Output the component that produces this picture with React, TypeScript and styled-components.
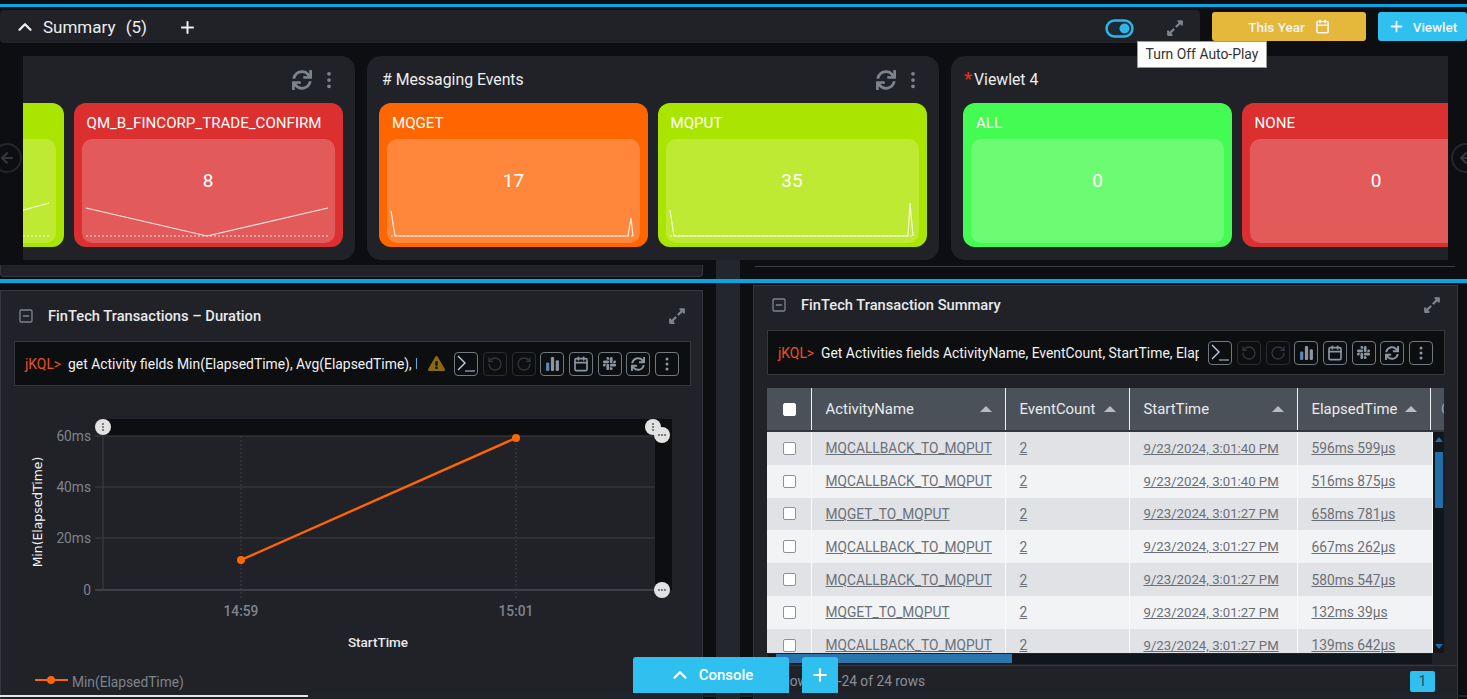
import React from 'react';
import styled, { createGlobalStyle } from 'styled-components';
import { ChevronUp, Plus, SquareMinus, Calendar, RotateCcw, RotateCw } from 'lucide-react';
import { FaSync, FaExpandAlt, FaSlack, FaExclamationTriangle, FaArrowLeft } from 'react-icons/fa';
import { BsThreeDotsVertical } from 'react-icons/bs';

const GlobalStyle = createGlobalStyle`
  html, body {
    margin: 0;
    height: 100%;
    overflow: hidden;
    background: #0d0e11;
    font-family: Roboto, "Liberation Sans", sans-serif;
  }
`;

const Page = styled.div`
  width: 1467px;
  height: 699px;
  position: relative;
  overflow: hidden;
  display: flex;
  flex-direction: column;
`;

const BlueLine = styled.div<{ $top: number; $h: number }>`
  height: ${(p) => p.$h}px;
  margin-top: ${(p) => p.$top}px;
  background: #06a6e6;
  flex: none;
`;

const HeaderRow = styled.div`
  display: flex;
  height: 33px;
  margin-top: 3px;
  flex: none;
`;

const SummaryBar = styled.div`
  width: 1200px;
  flex: none;
  background: #202228;
  border-radius: 4px;
  display: flex;
  align-items: center;
  padding: 1px 0 0 14px;
  box-sizing: border-box;
  color: #eceef0;
`;

const SummaryTitle = styled.span`
  font-size: 17px;
  font-weight: 400;
  margin-left: 7px;
  word-spacing: 6px;
  width: 135px;
`;

const Toggle = styled.svg`
  margin-left: auto;
  margin-right: 32px;
  margin-top: 3px;
`;

const ExpandBtn = styled(FaExpandAlt)<{ $size?: number }>`
  color: #7d838c;
  font-size: ${(p) => p.$size || 18}px;
  flex: none;
`;

const BarExpand = styled(ExpandBtn)`
  margin-right: 16px;
  margin-top: 1px;
`;

const ActionButton = styled.div<{ $bg: string; $w: number; $ml: number; $gap: number }>`
  width: ${(p) => p.$w}px;
  margin-left: ${(p) => p.$ml}px;
  height: 29px;
  margin-top: 2px;
  background: ${(p) => p.$bg};
  border-radius: 3px;
  color: #f4f4f4;
  display: flex;
  align-items: center;
  justify-content: center;
  gap: ${(p) => p.$gap}px;
  font-size: 13.5px;
  font-weight: 500;
  flex: none;
`;

const Tooltip = styled.div`
  position: absolute;
  left: 1137px;
  top: 41px;
  width: 130px;
  height: 27px;
  box-sizing: border-box;
  background: #fff;
  border: 1px solid #9a9a9a;
  color: #333;
  font-size: 13.9px;
  text-align: center;
  line-height: 25px;
  white-space: nowrap;
  z-index: 5;
`;

const Carousel = styled.div`
  margin: 13px 19px 0 23px;
  height: 204px;
  overflow: hidden;
  display: flex;
  gap: 12px;
  flex: none;
`;

const ViewletCard = styled.div<{ $shift?: number }>`
  width: 572px;
  height: 204px;
  flex: none;
  margin-left: ${(p) => p.$shift || 0}px;
  background: #202228;
  border-radius: 14px;
  padding: 0 13px 0 12px;
  box-sizing: border-box;
`;

const CardHead = styled.div`
  height: 47px;
  display: flex;
  align-items: center;
  padding: 0 3px;
  box-sizing: border-box;
  color: #eceef0;
  font-size: 15.8px;
  font-weight: 400;
`;

const Star = styled.span`
  color: #e8321a;
  margin: -2px 2px 0 -2px;
  font-size: 18px;
  font-weight: 500;
`;

const CardTools = styled.div`
  margin-left: auto;
  display: flex;
  align-items: center;
  gap: 7px;
  color: #7d838c;
  font-size: 20px;
`;

const Tiles = styled.div`
  display: flex;
  gap: 9.5px;
`;

const Tile = styled.div<{ $bg: string }>`
  width: 269px;
  height: 144px;
  flex: none;
  background: ${(p) => p.$bg};
  border-radius: 12px;
  padding: 0 8px 4px 8px;
  box-sizing: border-box;
  color: #fff;
  display: flex;
  flex-direction: column;
`;

const TileLabel = styled.div`
  height: 36px;
  line-height: 40px;
  padding-left: 5px;
  font-size: 15.1px;
  font-weight: 400;
  white-space: nowrap;
  flex: none;
`;

const TileInner = styled.div<{ $bg: string }>`
  flex: 1;
  position: relative;
  background: ${(p) => p.$bg};
  border-radius: 10px;
  text-align: center;
  font-size: 19px;
  font-weight: 400;
  padding-top: 30px;
  box-sizing: border-box;
`;

const Spark = styled.svg`
  position: absolute;
  left: 0;
  top: 0;
`;

const CarouselArrow = styled.div<{ $left: number }>`
  position: absolute;
  left: ${(p) => p.$left}px;
  top: 143px;
  width: 30px;
  height: 30px;
  border-radius: 50%;
  border: 2px solid #24262b;
  box-sizing: border-box;
  color: #33363c;
  display: flex;
  align-items: center;
  justify-content: center;
  font-size: 14px;
`;

const Columns = styled.div`
  display: grid;
  grid-template-columns: 703px 24px 705px;
  column-gap: 13px;
  justify-content: start;
`;

const Remnant = styled(Columns)`
  height: 19px;
  flex: none;
`;

const RemnantLeft = styled.div`
  height: 12px;
  margin-top: 5px;
  background: #202228;
  border: 1px solid #34373d;
  border-top: 0;
  border-radius: 0 0 4px 4px;
  box-sizing: border-box;
`;

const Gutter = styled.div`
  background: #23262d;
`;

const RemnantRight = styled.div`
  height: 1px;
  margin: 6px 3px 0 2px;
  background: #3b3e44;
`;

const Main = styled(Columns)`
  flex: 1;
  min-height: 0;
`;

const Panel = styled.div<{ $top: number }>`
  margin-top: ${(p) => p.$top}px;
  background: #202228;
  border: 1px solid #34373d;
  border-bottom: 0;
  box-sizing: border-box;
  display: flex;
  flex-direction: column;
  overflow: hidden;
  min-width: 0;
`;

const PanelHead = styled.div<{ $h: number; $pb?: number }>`
  height: ${(p) => p.$h}px;
  flex: none;
  display: flex;
  align-items: center;
  padding: 0 16px ${(p) => p.$pb || 0}px 17px;
  box-sizing: border-box;
  color: #e8eaec;
  font-size: 14.7px;
  font-weight: 500;
`;

const PanelTitle = styled.span`
  margin-left: 14px;
`;

const PanelExpand = styled(ExpandBtn)`
  margin-left: auto;
`;

const QueryBar = styled.div<{ $mr: number }>`
  height: 45px;
  flex: none;
  margin: 0 ${(p) => p.$mr}px 0 13px;
  background: #0d0e10;
  border: 1px solid #34373d;
  box-sizing: border-box;
  display: flex;
  align-items: center;
  padding: 0 11px 0 10px;
  font-size: 13.9px;
  font-weight: 400;
`;

const Prompt = styled.span`
  color: #e8502a;
  width: 43px;
  flex: none;
`;

const QueryText = styled.div`
  color: #f1f2f3;
  flex: 1;
  min-width: 0;
  overflow: hidden;
  white-space: nowrap;
`;

const Warn = styled(FaExclamationTriangle)`
  color: #8a6a10;
  font-size: 17px;
  flex: none;
  margin-left: 11px;
`;

const QueryTools = styled.div`
  display: flex;
  gap: 4.7px;
  margin-left: 9px;
  flex: none;
`;

const ToolBtn = styled.div<{ $off?: boolean }>`
  width: 24px;
  height: 24px;
  box-sizing: border-box;
  border: 1px solid ${(p) => (p.$off ? '#2a2c31' : '#717882')};
  border-radius: 4px;
  color: ${(p) => (p.$off ? '#34363b' : '#8c96a3')};
  display: flex;
  align-items: center;
  justify-content: center;
  font-size: 14px;
`;

const ChartBox = styled.svg`
  display: block;
  flex: none;
  margin-top: 9px;
  margin-left: -1px;
`;

const AxisLabel = styled.text`
  fill: #7f848c;
  font-size: 13.75px;
  font-family: Roboto, sans-serif;
`;

const AxisTitle = styled.text`
  fill: #e8eaec;
  font-size: 13.5px;
  font-weight: 500;
  font-family: Roboto, sans-serif;
`;

const YTitle = styled.text`
  fill: #f4f5f6;
  font-size: 12.4px;
  font-family: "DejaVu Sans", sans-serif;
`;

const TableBox = styled.div`
  margin: 13px 13px 0 13px;
  flex: none;
  height: 265px;
  overflow: hidden;
  font-size: 13.75px;
`;

const colTemplate = '45px 194px 124px 168px 133px 14px';

const HeadRow = styled.div`
  height: 44px;
  display: grid;
  grid-template-columns: ${colTemplate};
  background: #4b5159;
  border-bottom: 2px solid #33363c;
  box-sizing: border-box;
  color: #e9ebee;
  font-size: 14.9px;
  font-weight: 400;
`;

const HeadCell = styled.div`
  border-right: 1px solid #eef0f2;
  display: flex;
  align-items: center;
  padding: 0 13px 1px 13.5px;
  white-space: nowrap;
  overflow: hidden;
  &:last-child {
    border-right: 0;
    padding: 0 0 0 10px;
    color: #9aa0a6;
  }
`;

const HeadCheckCell = styled(HeadCell)`
  justify-content: center;
  padding: 0;
`;

const SortArrow = styled.i`
  margin-left: auto;
  width: 0;
  height: 0;
  border-left: 6px solid transparent;
  border-right: 6px solid transparent;
  border-bottom: 6px solid #b7bcc2;
`;

const Check = styled.div<{ $head?: boolean }>`
  width: 13px;
  height: 13px;
  box-sizing: border-box;
  background: #fff;
  border: 1px solid ${(p) => (p.$head ? '#fff' : '#8e9298')};
  border-radius: 2px;
`;

const BodyWrap = styled.div`
  display: flex;
  height: 221px;
`;

const Rows = styled.div`
  width: 666px;
  flex: none;
  overflow: hidden;
`;

const Row = styled.div<{ $odd: boolean }>`
  height: 32.8px;
  display: grid;
  grid-template-columns: 45px 194px 124px 168px 135px;
  background: ${(p) => (p.$odd ? '#e0e2e6' : '#f2f3f5')};
`;

const Cell = styled.div<{ $tight?: boolean }>`
  border-right: 1px solid #fafafa;
  display: flex;
  align-items: center;
  padding: 0 13px 0 13.5px;
  color: #6b7076;
  text-decoration: underline;
  white-space: nowrap;
  overflow: hidden;
  font-size: ${(p) => (p.$tight ? '13.2px' : 'inherit')};
`;

const CheckCell = styled(Cell)`
  justify-content: center;
  padding: 0;
`;

const VScroll = styled.div`
  flex: 1;
  background: #11151c;
  display: flex;
  flex-direction: column;
  align-items: center;
  padding-top: 5px;
  box-sizing: border-box;
`;

const ScrollCaret = styled.i<{ $down?: boolean }>`
  width: 0;
  height: 0;
  border-left: 4px solid transparent;
  border-right: 4px solid transparent;
  ${(p) => (p.$down ? 'border-top: 5px solid #1f6ea8; margin-top: auto; margin-bottom: 4px;' : 'border-bottom: 5px solid #1f6ea8;')}
`;

const VThumb = styled.div`
  width: 8px;
  height: 56px;
  margin-top: 10px;
  background: #1f6ea8;
`;

const HScroll = styled.div`
  height: 10px;
  margin: 1px 25px 0 14px;
  flex: none;
  background: #11151c;
  padding-left: 8px;
`;

const HThumb = styled.div`
  width: 236px;
  height: 9px;
  background: #2a75ad;
`;

const Footer = styled.div`
  margin-top: 1px;
  border-top: 1px solid #34373d;
  height: 30px;
  flex: none;
  display: flex;
  align-items: center;
  padding: 0 22px 0 20px;
  color: #8a8f96;
  font-size: 13.75px;
  font-weight: 400;
`;

const PageNum = styled.div`
  margin-left: auto;
  width: 25px;
  height: 21px;
  background: #2fc0f0;
  color: #26465a;
  text-align: center;
  line-height: 21px;
  border-radius: 2px;
`;

const ConsoleDock = styled.div`
  position: absolute;
  left: 633px;
  top: 657px;
  display: flex;
  gap: 13px;
  z-index: 4;
`;

const DockButton = styled.div<{ $w: number }>`
  width: ${(p) => p.$w}px;
  height: 36px;
  background: #2fc0f0;
  border-radius: 3px 3px 0 0;
  color: #fff;
  display: flex;
  align-items: center;
  justify-content: center;
  gap: 8px;
  font-size: 15px;
  font-weight: 500;
`;

const PageScroll = styled.div`
  position: absolute;
  left: 0;
  right: 0;
  bottom: 2px;
  height: 2px;
  background: #172733;
  z-index: 3;
`;

const PageThumb = styled.div`
  width: 308px;
  height: 2px;
  background: #e4e6e8;
`;

const BarsIcon = () => (
  <svg width="15" height="15" viewBox="0 0 14 14" fill="currentColor">
    <rect x="1" y="6" width="3" height="8" rx="1" fill="#5d86b3" />
    <rect x="5.5" y="1" width="3" height="13" rx="1" />
    <rect x="10" y="4" width="3" height="10" rx="1" />
  </svg>
);

const TerminalIcon = () => (
  <svg width="20" height="20" viewBox="0 0 20 20" fill="none" stroke="#b9d2ea" strokeWidth="1.4">
    <path d="M2 2l7 7-7 7" />
    <path d="M9 17h10" stroke="#8c96a3" />
  </svg>
);

function Tools() {
  return (
    <QueryTools>
      <ToolBtn><TerminalIcon /></ToolBtn>
      <ToolBtn $off><RotateCcw size={16} /></ToolBtn>
      <ToolBtn $off><RotateCw size={16} /></ToolBtn>
      <ToolBtn><BarsIcon /></ToolBtn>
      <ToolBtn><Calendar size={16} strokeWidth={2.5} /></ToolBtn>
      <ToolBtn><FaSlack size={15} /></ToolBtn>
      <ToolBtn><FaSync /></ToolBtn>
      <ToolBtn><BsThreeDotsVertical size={16} /></ToolBtn>
    </QueryTools>
  );
}

const RED = { bg: '#dc3030', inner: '#e25a5a' };
const ORANGE = { bg: '#ff6600', inner: '#ff873b' };
const LIME = { bg: '#a9e500', inner: '#bfea33' };
const GREEN = { bg: '#43fb52', inner: '#6cfb73' };

type TileData = { label?: string; value?: string; tone: { bg: string; inner: string }; line?: string };

const cards: { title?: string; star?: boolean; tools: boolean; shift?: number; tiles: TileData[] }[] = [
  {
    tools: true,
    shift: -240,
    tiles: [
      { tone: LIME, line: '4,69 125,97 246,64' },
      { label: 'QM_B_FINCORP_TRADE_CONFIRM', value: '8', tone: RED, line: '4,69 125,97 246,69' },
    ],
  },
  {
    title: '# Messaging Events',
    tools: true,
    tiles: [
      { label: 'MQGET', value: '17', tone: ORANGE, line: '4,72 8,97 241,97 244,79 246,97' },
      { label: 'MQPUT', value: '35', tone: LIME, line: '4,71 8,97 242,97 244,64 247,97' },
    ],
  },
  {
    title: 'Viewlet 4',
    star: true,
    tools: false,
    tiles: [
      { label: 'ALL', value: '0', tone: GREEN },
      { label: 'NONE', value: '0', tone: RED },
    ],
  },
];

const tableRows = [
  ['MQCALLBACK_TO_MQPUT', '2', '9/23/2024, 3:01:40 PM', '596ms 599µs'],
  ['MQCALLBACK_TO_MQPUT', '2', '9/23/2024, 3:01:40 PM', '516ms 875µs'],
  ['MQGET_TO_MQPUT', '2', '9/23/2024, 3:01:27 PM', '658ms 781µs'],
  ['MQCALLBACK_TO_MQPUT', '2', '9/23/2024, 3:01:27 PM', '667ms 262µs'],
  ['MQCALLBACK_TO_MQPUT', '2', '9/23/2024, 3:01:27 PM', '580ms 547µs'],
  ['MQGET_TO_MQPUT', '2', '9/23/2024, 3:01:27 PM', '132ms 39µs'],
  ['MQCALLBACK_TO_MQPUT', '2', '9/23/2024, 3:01:27 PM', '139ms 642µs'],
];

const Handle = ({ x, y, vertical }: { x: number; y: number; vertical?: boolean }) => (
  <g>
    <circle cx={x} cy={y} r={8} fill="#e2e2e2" />
    {[-3, 0, 3].map((d) => (
      <circle
        key={d}
        cx={vertical ? x : x + d}
        cy={vertical ? y + d : y}
        r={1.1}
        fill="#666"
      />
    ))}
  </g>
);

function Chart() {
  return (
    <ChartBox width="703" height="304" viewBox="0 395 703 304">
      <rect x="103" y="419" width="569" height="17" fill="#0d0e10" />
      <rect x="655" y="436" width="17" height="154" fill="#0d0e10" />
      {[436, 487, 538].map((y) => (
        <line key={y} x1="95" x2="655" y1={y} y2={y} stroke="#3c3f45" />
      ))}
      <line x1="95" x2="655" y1="590" y2="590" stroke="#4a4d53" strokeWidth="1.5" />
      <line x1="103" x2="103" y1="436" y2="590" stroke="#3c3f45" />
      <line x1="241" x2="241" y1="436" y2="598" stroke="#3c3f45" strokeDasharray="2 2" />
      <line x1="516" x2="516" y1="436" y2="598" stroke="#3c3f45" strokeDasharray="2 2" />
      <AxisLabel x="91" y="441" textAnchor="end">60ms</AxisLabel>
      <AxisLabel x="91" y="492" textAnchor="end">40ms</AxisLabel>
      <AxisLabel x="91" y="543" textAnchor="end">20ms</AxisLabel>
      <AxisLabel x="91" y="595" textAnchor="end">0</AxisLabel>
      <AxisLabel x="241" y="616" textAnchor="middle" fontWeight="500">14:59</AxisLabel>
      <AxisLabel x="516" y="616" textAnchor="middle" fontWeight="500">15:01</AxisLabel>
      <AxisTitle x="378" y="647" textAnchor="middle">StartTime</AxisTitle>
      <YTitle x="42" y="512" textAnchor="middle" transform="rotate(-90 42 512)">Min(ElapsedTime)</YTitle>
      <line x1="241" y1="560" x2="516" y2="438" stroke="#ff6600" strokeWidth="2.4" />
      <circle cx="241" cy="560" r="4" fill="#ff6600" />
      <circle cx="516" cy="438" r="4" fill="#ff6600" />
      <Handle x={103} y={427} vertical />
      <Handle x={653} y={427} vertical />
      <Handle x={662} y={435} />
      <Handle x={662} y={590} />
      <line x1="35" x2="68" y1="680" y2="680" stroke="#ff6600" strokeWidth="2" />
      <circle cx="51" cy="680" r="4" fill="#ff6600" />
      <AxisLabel x="72" y="687">Min(ElapsedTime)</AxisLabel>
    </ChartBox>
  );
}

export default function App() {
  return (
    <Page>
      <GlobalStyle />
      <BlueLine $top={4} $h={3} />
      <HeaderRow>
        <SummaryBar>
          <ChevronUp size={22} strokeWidth={2.5} />
          <SummaryTitle>Summary (5)</SummaryTitle>
          <Plus size={19} strokeWidth={2.5} />
          <Toggle width="29" height="19" viewBox="0 0 29 19">
            <rect x="1.5" y="1.5" width="26" height="16" rx="8" fill="#1c2a36" stroke="#2fb5e8" strokeWidth="2.5" />
            <circle cx="19.5" cy="9.5" r="5" fill="#2fb5e8" />
          </Toggle>
          <BarExpand />
        </SummaryBar>
        <ActionButton $bg="#e5b73b" $w={154} $ml={12} $gap={10}>
          This Year <Calendar size={15} strokeWidth={2.5} />
        </ActionButton>
        <ActionButton $bg="#2fc0f0" $w={89} $ml={12} $gap={8}>
          <Plus size={17} strokeWidth={2.5} /> Viewlet
        </ActionButton>
      </HeaderRow>
      <Tooltip>Turn Off Auto-Play</Tooltip>

      <Carousel>
        {cards.map((card, i) => (
          <ViewletCard key={i} $shift={card.shift}>
            <CardHead>
              {card.star && <Star>*</Star>}
              {card.title}
              {card.tools && (
                <CardTools>
                  <FaSync />
                  <BsThreeDotsVertical />
                </CardTools>
              )}
            </CardHead>
            <Tiles>
              {card.tiles.map((t, j) => (
                <Tile key={j} $bg={t.tone.bg}>
                  <TileLabel>{t.label}</TileLabel>
                  <TileInner $bg={t.tone.inner}>
                    {t.value}
                    {t.line && (
                      <Spark width="252" height="104" viewBox="0 0 252 104" fill="none">
                        <line x1="4" x2="248" y1="97" y2="97" stroke="#fff" strokeOpacity=".85" strokeDasharray="2 2" />
                        <polyline points={t.line} stroke="#fff" strokeOpacity=".85" strokeWidth="1.2" />
                      </Spark>
                    )}
                  </TileInner>
                </Tile>
              ))}
            </Tiles>
          </ViewletCard>
        ))}
      </Carousel>
      <CarouselArrow $left={-8}><FaArrowLeft /></CarouselArrow>
      <CarouselArrow $left={1451}><FaArrowLeft /></CarouselArrow>

      <Remnant>
        <RemnantLeft />
        <Gutter />
        <RemnantRight />
      </Remnant>
      <BlueLine $top={0} $h={4} />

      <Main>
        <Panel $top={7}>
          <PanelHead $h={50}>
            <SquareMinus size={16} color="#7d838c" />
            <PanelTitle>FinTech Transactions – Duration</PanelTitle>
            <PanelExpand />
          </PanelHead>
          <QueryBar $mr={11}>
            <Prompt>jKQL&gt;</Prompt>
            <QueryText>get Activity fields Min(ElapsedTime), Avg(ElapsedTime), Max(ElapsedTime)</QueryText>
            <Warn />
            <Tools />
          </QueryBar>
          <Chart />
        </Panel>
        <Gutter />
        <Panel $top={2}>
          <PanelHead $h={44} $pb={7}>
            <SquareMinus size={16} color="#7d838c" />
            <PanelTitle>FinTech Transaction Summary</PanelTitle>
            <PanelExpand />
          </PanelHead>
          <QueryBar $mr={12}>
            <Prompt>jKQL&gt;</Prompt>
            <QueryText>Get Activities fields ActivityName, EventCount, StartTime, ElapsedTime</QueryText>
            <Tools />
          </QueryBar>
          <TableBox>
            <HeadRow>
              <HeadCheckCell><Check $head /></HeadCheckCell>
              <HeadCell>ActivityName<SortArrow /></HeadCell>
              <HeadCell>EventCount<SortArrow /></HeadCell>
              <HeadCell>StartTime<SortArrow /></HeadCell>
              <HeadCell>ElapsedTime<SortArrow /></HeadCell>
              <HeadCell>C</HeadCell>
            </HeadRow>
            <BodyWrap>
              <Rows>
                {tableRows.map((r, i) => (
                  <Row key={i} $odd={i % 2 === 0}>
                    <CheckCell><Check /></CheckCell>
                    {r.map((c, j) => (
                      <Cell key={j} $tight={j === 2}>{c}</Cell>
                    ))}
                  </Row>
                ))}
              </Rows>
              <VScroll>
                <ScrollCaret />
                <VThumb />
                <ScrollCaret $down />
              </VScroll>
            </BodyWrap>
          </TableBox>
          <HScroll><HThumb /></HScroll>
          <Footer>
            Showing 1-24 of 24 rows
            <PageNum>1</PageNum>
          </Footer>
        </Panel>
      </Main>

      <PageScroll><PageThumb /></PageScroll>
      <ConsoleDock>
        <DockButton $w={156}><ChevronUp size={22} strokeWidth={2.5} /> Console</DockButton>
        <DockButton $w={36}><Plus size={20} strokeWidth={2.5} /></DockButton>
      </ConsoleDock>
    </Page>
  );
}
